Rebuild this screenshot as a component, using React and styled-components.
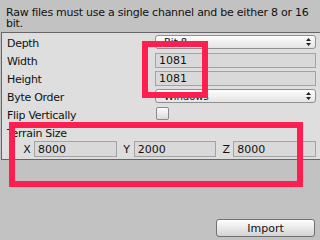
import styled, {createGlobalStyle} from 'styled-components';

const GlobalStyle = createGlobalStyle`
  html, body {
    margin: 0;
    padding: 0;
    background: #c2c2c2;
  }
  body {
    font-family: "DejaVu Sans", "Liberation Sans", sans-serif;
    font-size: 11px;
    color: #111;
  }
`;

const Window = styled.div`
  position: relative;
  display: flex;
  flex-direction: column;
  width: 320px;
  height: 240px;
  overflow: hidden;
  background: #c2c2c2;
`;

const Message = styled.p`
  margin: 0;
  padding: 7px 4px 3px 6px;
  height: 22px;
  line-height: 11px;
  font-size: 11px;
  letter-spacing: -0.25px;
`;

const Panel = styled.section`
  margin-left: 1px;
  padding: 2px 4px 0 5px;
  height: 124px;
  background: #dedede;
  border: 1px solid #666;
  border-right: none;
`;

const Row = styled.div`
  display: flex;
  align-items: flex-start;
  height: ${p => p.$h || 18}px;
`;

const Label = styled.div`
  width: 148px;
  line-height: 17px;
  letter-spacing: -0.3px;
  white-space: nowrap;
`;

const Field = styled.div`
  flex: 1;
  box-sizing: border-box;
  height: 15px;
  padding: 0 3px;
  line-height: 14px;
  background: #d9d9d9;
  border: 1px solid #a3a3a3;
  font-size: 11px;
`;

const Dropdown = styled.div`
  flex: 1;
  display: flex;
  align-items: center;
  justify-content: space-between;
  box-sizing: border-box;
  height: 14px;
  padding: 0 4px 0 8px;
  font-size: 10px;
  background: linear-gradient(#fdfdfd, #e4e4e4);
  border: 1px solid #8f8f8f;
  border-radius: 3px;
`;

const Checkbox = styled.div`
  box-sizing: border-box;
  width: 13px;
  height: 13px;
  margin-left: 1px;
  background: linear-gradient(#fbfbfb, #dcdcdc);
  border: 1px solid #8a8a8a;
  border-radius: 2px;
`;

const VectorRow = styled.div`
  display: grid;
  grid-template-columns: repeat(3, 1fr);
  column-gap: 3px;
  padding-left: 13px;
  height: 16px;
`;

const Axis = styled.div`
  display: flex;
  align-items: center;

  span {
    width: 14px;
    text-align: center;
  }
`;

const AxisField = styled(Field)`
  height: 16px;
  line-height: 15px;
`;

const Spacer = styled.div`
  flex: 1;
`;

const Footer = styled.div`
  display: flex;
  justify-content: flex-end;
  padding: 0 5px 3px 0;
`;

const Button = styled.button`
  box-sizing: border-box;
  width: 99px;
  height: 18px;
  padding: 0;
  font-family: inherit;
  font-size: 11px;
  color: #111;
  background: linear-gradient(#ffffff, #d2d2d2);
  border: 1px solid #707070;
  border-radius: 3px;
`;

const Mark = styled.div`
  position: absolute;
  left: ${p => p.$x}px;
  top: ${p => p.$y}px;
  width: ${p => p.$w}px;
  height: ${p => p.$h}px;
  box-sizing: border-box;
  border: 6px solid #fe1f50;
`;

function Arrows() {
  return (
    <svg width="5" height="8" viewBox="0 0 5 8">
      <path d="M2.5 0 L5 3 L0 3 Z M2.5 8 L5 5 L0 5 Z" fill="#222" />
    </svg>
  );
}

export default function App() {
  return (
    <Window>
      <GlobalStyle />
      <Message>Raw files must use a single channel and be either 8 or 16 bit.</Message>
      <Panel>
        <Row>
          <Label>Depth</Label>
          <Dropdown>
            <span>Bit 8</span>
            <Arrows />
          </Dropdown>
        </Row>
        <Row>
          <Label>Width</Label>
          <Field>1081</Field>
        </Row>
        <Row>
          <Label>Height</Label>
          <Field>1081</Field>
        </Row>
        <Row>
          <Label>Byte Order</Label>
          <Dropdown>
            <span>Windows</span>
            <Arrows />
          </Dropdown>
        </Row>
        <Row>
          <Label>Flip Vertically</Label>
          <Checkbox />
        </Row>
        <Row $h={16}>
          <Label>Terrain Size</Label>
        </Row>
        <VectorRow>
          <Axis>
            <span>X</span>
            <AxisField>8000</AxisField>
          </Axis>
          <Axis>
            <span>Y</span>
            <AxisField>2000</AxisField>
          </Axis>
          <Axis>
            <span>Z</span>
            <AxisField>8000</AxisField>
          </Axis>
        </VectorRow>
      </Panel>
      <Spacer />
      <Footer>
        <Button>Import</Button>
      </Footer>
      <Mark $x={142} $y={41} $w={66} $h={57} />
      <Mark $x={9} $y={122} $w={294} $h={65} />
    </Window>
  );
}
